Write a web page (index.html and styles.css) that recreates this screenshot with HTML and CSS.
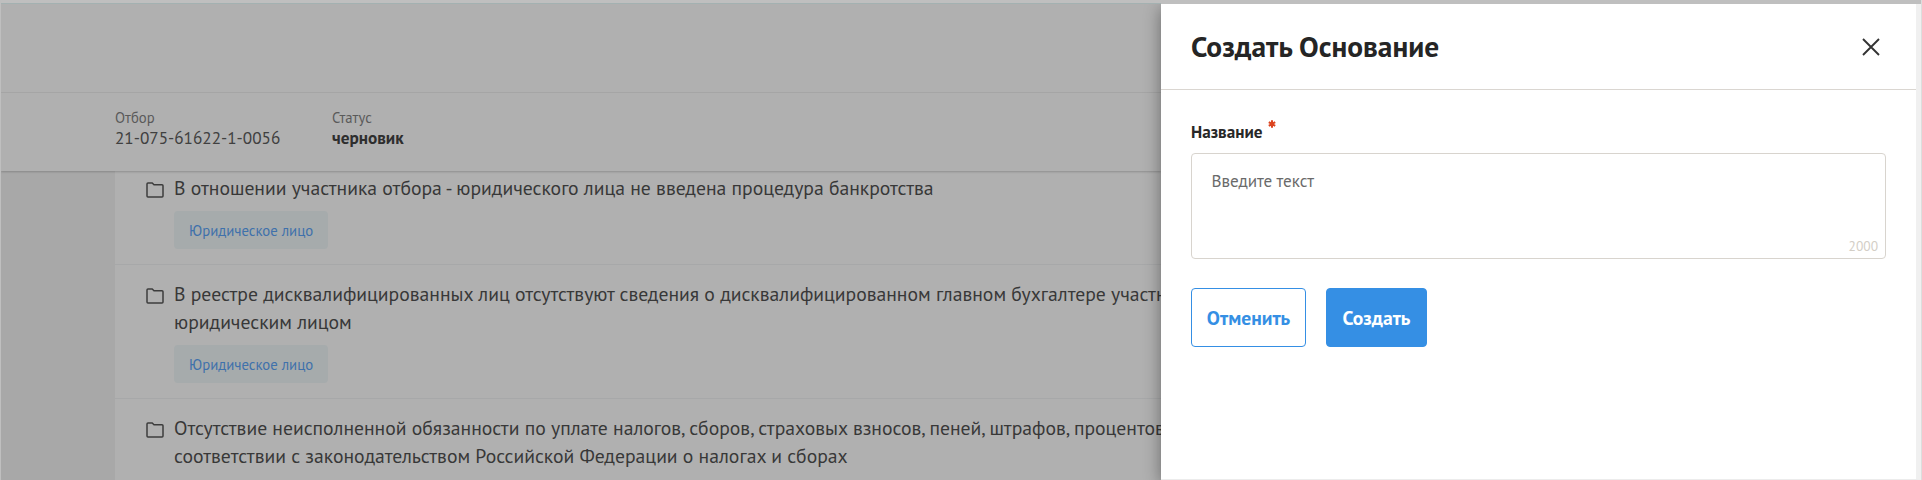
FILE: index.html
```
<!DOCTYPE html>
<html lang="ru">
<head>
<meta charset="utf-8">
<title>Создать Основание</title>
<link rel="stylesheet" href="styles.css">
</head>
<body>
<div class="page">
  <header class="topbar"></header>
  <section class="infobar">
    <div class="info info-id"><span class="info-label">Отбор</span><span class="info-value">21-075-61622-1-0056</span></div>
    <div class="info"><span class="info-label">Статус</span><b class="info-value strong">черновик</b></div>
  </section>
  <main class="content">
    <ul class="list">
      <li class="item">
        <svg class="folder" viewBox="0 0 18 16"><path d="M1 2Q1 1 2 1H6.2L8 2.7H16Q17 2.7 17 3.7V14Q17 15 16 15H2Q1 15 1 14Z"/></svg>
        <div class="item-body"><p class="item-text">В отношении участника отбора - юридического лица не введена процедура банкротства</p><span class="chip">Юридическое лицо</span></div>
      </li>
      <li class="item">
        <svg class="folder" viewBox="0 0 18 16"><path d="M1 2Q1 1 2 1H6.2L8 2.7H16Q17 2.7 17 3.7V14Q17 15 16 15H2Q1 15 1 14Z"/></svg>
        <div class="item-body"><p class="item-text">В реестре дисквалифицированных лиц отсутствуют сведения о дисквалифицированном главном бухгалтере участн<br>юридическим лицом</p><span class="chip">Юридическое лицо</span></div>
      </li>
      <li class="item">
        <svg class="folder" viewBox="0 0 18 16"><path d="M1 2Q1 1 2 1H6.2L8 2.7H16Q17 2.7 17 3.7V14Q17 15 16 15H2Q1 15 1 14Z"/></svg>
        <div class="item-body"><p class="item-text">Отсутствие неисполненной обязанности по уплате налогов, сборов, страховых взносов, пеней, штрафов, процентов<br>соответствии с законодательством Российской Федерации о налогах и сборах</p></div>
      </li>
    </ul>
  </main>
</div>
<aside class="drawer">
  <div class="drawer-head">
    <h1 class="drawer-title">Создать Основание</h1>
    <button class="close" aria-label="Закрыть"><svg viewBox="0 0 18 18"><path d="M1 1L17 17M17 1L1 17"/></svg></button>
  </div>
  <form class="form">
    <label class="label">Название<svg class="star" viewBox="0 0 8 8"><path d="M4 .3V7.7M.8 2.1L7.2 5.9M7.2 2.1L.8 5.9"/></svg></label>
    <div class="field"><span class="placeholder">Введите текст</span><span class="counter">2000</span></div>
    <div class="actions"><button type="button" class="btn">Отменить</button><button type="button" class="btn primary">Создать</button></div>
  </form>
</aside>
</body>
</html>
```
FILE: styles.css
```
* { box-sizing: border-box; }
body {
  margin: 0;
  height: 480px;
  overflow: hidden;
  background: #bfbfbf;
  color: #383838;
  font-family: "PT Sans", "Noto Sans", sans-serif;
  display: grid;
  grid-template-columns: 1161px 1fr;
  border-right: 1px solid #dcdedd;
}
.page {
  margin: 3px 0 0 1px;
  border-top: 1px solid #a3b1b1;
  height: 477px;
  overflow: hidden;
  background: #a8a8a8;
}
.topbar { height: 89px; background: #b0b0b0; border-bottom: 1px solid #a7a7a7; }
.infobar {
  position: relative;
  display: flex;
  height: 78px;
  padding: 16px 0 0 114px;
  background: #b0b0b0;
  box-shadow: 0 1px 2px rgba(0, 0, 0, .2);
}
.info { display: flex; flex-direction: column; align-items: flex-start; white-space: nowrap; }
.info-id { width: 217px; }
.info-label { font-size: 14.7px; line-height: 18px; color: #5a5a5a; }
.info-value { font-size: 17.2px; line-height: 21px; color: #404040; }
.strong { color: #2e2e2e; }
.content { padding-left: 114px; }
.list { list-style: none; margin: -12px 0 0; padding: 0; background: #b0b0b0; }
.item {
  display: flex;
  padding: 15px 0 15px 30px;
  border-bottom: 1px solid #a7a8a9;
}
.folder { width: 18px; height: 16px; margin: 8px 10px 0 1px; flex: none; fill: none; stroke: #3c3c3c; stroke-width: 1.5; }
.item-body { white-space: nowrap; }
.item-text { margin: 0 0 9px; font-size: 19.66px; line-height: 28px; }
.chip {
  display: flex;
  align-items: center;
  width: 154px;
  height: 38px;
  padding-left: 15px;
  border-radius: 4px;
  background: #a6abac;
  color: #3f71ab;
  font-size: 14.75px;
}
.drawer {
  position: relative;
  margin-top: 4px;
  height: 476px;
  background: #fff;
  border-right: 5px solid #f0f0f0;
  border-bottom: 1px solid #ececec;
  box-shadow: 0 4px 16px rgba(0, 0, 0, .4);
  clip-path: inset(0 0 0 -24px);
}
.drawer-head {
  display: flex;
  align-items: center;
  justify-content: space-between;
  height: 86px;
  padding: 0 36px 0 30px;
  border-bottom: 1px solid #dad6d1;
}
.drawer-title { margin: 0 0 2px; font-size: 29.4px; line-height: 36px; color: #252525; }
.close { width: 18px; height: 18px; padding: 0; border: 0; background: none; }
.close svg { display: block; fill: none; stroke: #333; stroke-width: 1.9; }
.form { padding: 31px 30px 0; }
.label { display: flex; height: 32px; font-size: 17.15px; line-height: 22px; font-weight: 700; color: #282828; }
.star { width: 8px; height: 8px; margin: -1px 0 0 6px; fill: none; stroke: #dc4420; stroke-width: 2; }
.field {
  display: flex;
  justify-content: space-between;
  height: 106px;
  padding: 16px 7px 4px 19.5px;
  border: 1px solid #d8d4ce;
  border-radius: 4px;
}
.placeholder { font-size: 17.15px; line-height: 22px; color: #6a6a6a; }
.counter { align-self: flex-end; font-size: 13.5px; line-height: 16px; color: #d3cec6; }
.actions { display: flex; gap: 20px; margin-top: 29px; }
.btn {
  height: 59px;
  padding: 0 0 1px;
  width: 115px;
  border: 1px solid #358fe4;
  border-radius: 4px;
  background: #fff;
  color: #358fe4;
  font: 700 19.6px "PT Sans", "Noto Sans", sans-serif;
}
.primary { width: 101px; background: #358fe4; color: #fff; }
```
